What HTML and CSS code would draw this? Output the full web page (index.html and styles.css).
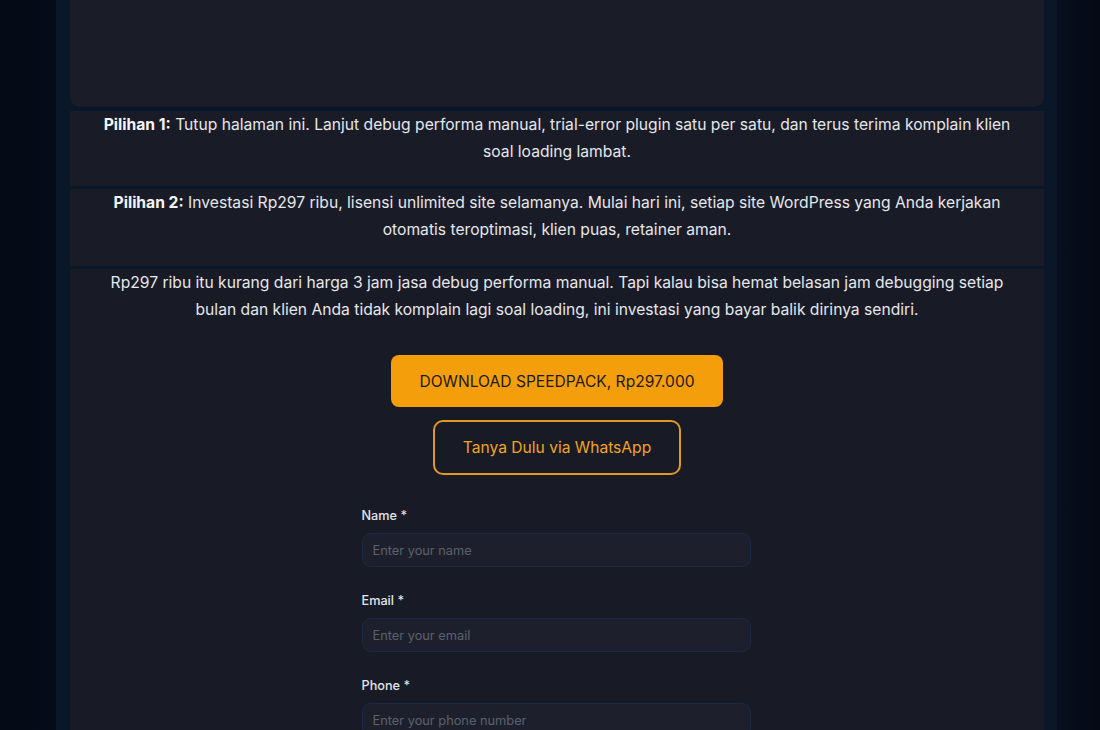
FILE: index.html
```html
<!DOCTYPE html>
<html lang="id">
<head>
<meta charset="utf-8">
<title>SpeedPack</title>
<link rel="stylesheet" href="styles.css">
</head>
<body>
<div class="page">
  <div class="column">
    <div class="media-card"></div>
    <section class="choice choice-1">
      <p><strong>Pilihan 1:</strong> Tutup halaman ini. Lanjut debug performa manual, trial-error plugin satu per satu, dan terus terima komplain klien soal loading lambat.</p>
    </section>
    <section class="choice choice-2">
      <p><strong>Pilihan 2:</strong> Investasi Rp297 ribu, lisensi unlimited site selamanya. Mulai hari ini, setiap site WordPress yang Anda kerjakan otomatis teroptimasi, klien puas, retainer aman.</p>
    </section>
    <section class="main">
      <p class="lead">Rp297 ribu itu kurang dari harga 3 jam jasa debug performa manual. Tapi kalau bisa hemat belasan jam debugging setiap bulan dan klien Anda tidak komplain lagi soal loading, ini investasi yang bayar balik dirinya sendiri.</p>
      <div class="actions">
        <a class="btn-primary" href="#">DOWNLOAD SPEEDPACK, Rp297.000</a>
        <a class="btn-outline" href="#">Tanya Dulu via WhatsApp</a>
      </div>
      <form class="form">
        <div class="field">
          <label class="label">Name *</label>
          <input class="input" type="text" placeholder="Enter your name">
        </div>
        <div class="field">
          <label class="label">Email *</label>
          <input class="input" type="email" placeholder="Enter your email">
        </div>
        <div class="field">
          <label class="label">Phone *</label>
          <input class="input" type="tel" placeholder="Enter your phone number">
        </div>
      </form>
    </section>
  </div>
</div>
</body>
</html>
```
FILE: styles.css
```css
html, body {
  margin: 0;
  padding: 0;
  height: 100%;
}
body {
  background: linear-gradient(90deg, #040a16 0%, #050c19 5%, #040a16 5.1%, #040a16 96%, #07101f 96.1%, #040914 100%);
  font-family: Inter, "Noto Sans", sans-serif;
  color: #e5e7eb;
  overflow: hidden;
}
.page {
  margin-left: 56px;
  width: 1001px;
  height: 100%;
  background: #0a1729;
  padding: 0 13px 0 14px;
  box-sizing: border-box;
}
.column {
  display: flex;
  flex-direction: column;
  gap: 3px;
  height: 100%;
}
.media-card {
  height: 107px;
  background: #1a1d28;
  border-radius: 0 0 10px 10px;
  margin-bottom: 1px;
  flex: none;
}
.choice {
  background: #191c27;
  padding: 0 32px;
  flex: none;
}
.choice p, .main .lead {
  margin: 0;
  font-size: 15.65px;
  line-height: 27px;
  text-align: center;
}
.choice strong {
  font-weight: 700;
  color: #f3f4f6;
}
.choice-1 {
  height: 75px;
}
.choice-2 {
  height: 77px;
}
.main {
  background: #181b26;
  padding: 0 32px;
  flex: 1;
}
.actions {
  display: flex;
  flex-direction: column;
  align-items: center;
  gap: 13px;
  margin-top: 32px;
}
.btn-primary {
  display: flex;
  align-items: center;
  justify-content: center;
  width: 332px;
  height: 52px;
  box-sizing: border-box;
  background: #f59e0b;
  color: #1c1a14;
  border-radius: 8px;
  font-size: 15.6px;
  text-decoration: none;
}
.btn-outline {
  display: flex;
  align-items: center;
  justify-content: center;
  width: 248px;
  height: 55px;
  box-sizing: border-box;
  border: 2px solid #e09a1e;
  border-radius: 10px;
  color: #f2a41f;
  font-size: 15.6px;
  text-decoration: none;
}
.form {
  width: 389px;
  margin: 32px auto 0;
  position: relative;
  left: -1px;
}
.field {
  display: flex;
  flex-direction: column;
  margin-bottom: 25px;
}
.label {
  font-size: 12.7px;
  line-height: 18px;
  font-weight: 450;
  color: #e2e4e9;
  margin-bottom: 8px;
}
.input {
  height: 34px;
  box-sizing: border-box;
  background: #1d202c;
  border: 1px solid #1b2a44;
  border-radius: 9px;
  padding: 0 10px;
  font-family: Inter, "Noto Sans", sans-serif;
  font-size: 12.8px;
  color: #e5e7eb;
  outline: none;
}
.input::placeholder {
  color: #5b606c;
}
```
